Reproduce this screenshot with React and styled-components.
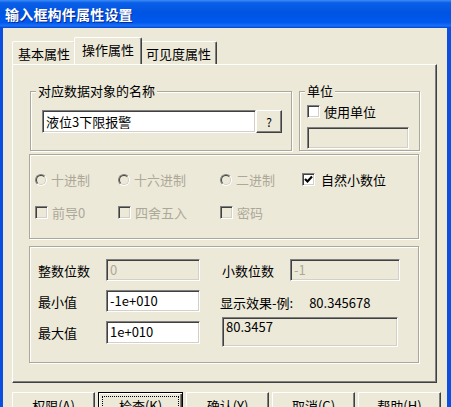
import React from 'react';
import styled, { createGlobalStyle, css } from 'styled-components';

const GlobalStyle = createGlobalStyle`
  html, body {
    margin: 0;
    padding: 0;
    background: #ece9d8;
  }
  * {
    box-sizing: border-box;
  }
`;

const FONT = `"Noto Sans CJK SC", "Noto Sans", sans-serif`;
const FACE = '#ece9d8';
const GRAY = '#aca899';

const sunken = css`
  border: 1px solid;
  border-color: #808080 #ffffff #ffffff #808080;
  box-shadow: inset 1px 1px 0 #404040, inset -1px -1px 0 #d4d0c8;
`;

const Window = styled.div`
  width: 451px;
  height: 407px;
  overflow: hidden;
  display: flex;
  flex-direction: column;
  background: ${FACE};
  font-family: ${FONT};
  font-size: 13px;
  color: #000;
`;

const TitleBar = styled.div`
  height: 28px;
  flex: none;
  display: flex;
  align-items: center;
  padding-left: 5px;
  background: linear-gradient(
    #3d8cf5 0%,
    #0a5fe8 10%,
    #0054e3 45%,
    #0058ee 80%,
    #1b6ff5 92%,
    #0046d6 100%
  );
  color: #fff;
  font-weight: bold;
  font-size: 14px;
  letter-spacing: 0.2px;
  text-shadow: 1px 1px 0 #0a2a8c;
`;

const Body = styled.div`
  flex: 1;
  display: flex;
  flex-direction: column;
  border-left: 3px solid #0b4fe0;
  border-right: 4px solid #0b4fe0;
  padding: 10px 0 0 9px;
`;

const TabRow = styled.div`
  display: flex;
  align-items: flex-end;
  height: 26px;
  position: relative;
  z-index: 1;
`;

const Tab = styled.div`
  height: ${({ $active }) => ($active ? '27px' : '23px')};
  padding: 0 ${({ $active }) => ($active ? '7px' : '5px')};
  margin: 0 ${({ $active }) => ($active ? '-2px' : '0')};
  display: flex;
  align-items: center;
  background: ${FACE};
  border: 1px solid;
  border-bottom: none;
  border-color: #fff #404040 #404040 #fff;
  border-radius: 2px 2px 0 0;
  box-shadow: inset -1px 0 0 #808080;
  line-height: 1;
  padding-bottom: ${({ $active }) => ($active ? '3px' : '0')};
  position: relative;
  z-index: ${({ $active }) => ($active ? 2 : 0)};
`;

const Panel = styled.div`
  width: 425px;
  height: 319px;
  flex: none;
  border: 1px solid;
  border-color: #fff #404040 #404040 #fff;
  box-shadow: inset -1px -1px 0 #808080;
  padding: 26px 0 0 16px;
  display: flex;
  flex-direction: column;
`;

const Group = styled.div`
  position: relative;
  width: ${({ $w }) => $w}px;
  height: ${({ $h }) => $h}px;
  margin-top: ${({ $top }) => $top || 0}px;
  flex: none;
  border: 1px solid ${GRAY};
  box-shadow: inset 1px 1px 0 #fff, 1px 1px 0 #fff;
`;

const Caption = styled.span`
  position: absolute;
  top: -10px;
  left: 5px;
  padding: 0 2px;
  background: ${FACE};
  line-height: 18px;
`;

const TopRow = styled.div`
  display: flex;
  gap: 7px;
  padding-left: 1px;
`;

const NameBody = styled.div`
  display: flex;
  padding: 18px 0 0 11px;
`;

const TextBox = styled.div`
  ${sunken};
  width: ${({ $w }) => $w}px;
  height: ${({ $h }) => $h || 22}px;
  background: ${({ $disabled, $grey }) => ($disabled || $grey ? FACE : '#fff')};
  color: ${({ $disabled }) => ($disabled ? GRAY : '#000')};
  padding: 0 3px;
  display: flex;
  align-items: ${({ $top }) => ($top ? 'flex-start' : 'center')};
  line-height: 16px;
  white-space: nowrap;
  overflow: hidden;
`;

const SmallButton = styled.div`
  width: 26px;
  height: 23px;
  display: flex;
  align-items: center;
  justify-content: center;
  border: 1px solid;
  border-color: #fff #404040 #404040 #fff;
  box-shadow: inset -1px -1px 0 #808080;
  font-size: 12px;
`;

const UnitBody = styled.div`
  display: flex;
  flex-direction: column;
  padding: 11px 0 0 7px;
  gap: 7px;
`;

const Option = styled.div`
  display: flex;
  align-items: center;
  gap: ${({ $gap }) => $gap || 4}px;
  height: 17px;
  line-height: 17px;
  white-space: nowrap;
  color: ${({ $disabled }) => ($disabled ? GRAY : '#000')};
`;

const Box = styled.span`
  width: 13px;
  height: 13px;
  flex: none;
  ${sunken};
  background: ${({ $disabled }) => ($disabled ? FACE : '#fff')};
  display: flex;
  align-items: center;
  justify-content: center;
`;

const Radio = styled.span`
  width: 12px;
  height: 12px;
  flex: none;
  border-radius: 50%;
  border: 1px solid;
  border-color: #808080 #fff #fff #808080;
  display: flex;

  &::after {
    content: '';
    flex: 1;
    border-radius: 50%;
    border: 1px solid;
    border-color: #404040 #d4d0c8 #d4d0c8 #404040;
    background: ${FACE};
  }
`;

const OptionGrid = styled.div`
  display: grid;
  grid-template-columns: 83px 102px 82px auto;
  row-gap: 16px;
  padding: 16px 0 0 5px;
`;

const ValueGrid = styled.div`
  display: grid;
  grid-template-columns: 68px 94px 20px 70px 110px;
  grid-auto-rows: 22px;
  row-gap: 9px;
  padding: 12px 0 0 8px;
  align-items: center;
`;

const Label = styled.span`
  padding-left: ${({ $pad }) => $pad || 0}px;
  white-space: nowrap;
`;

const Sample = styled.div`
  grid-column: 4 / span 2;
  display: flex;
  gap: 16px;
  white-space: nowrap;
  margin-top: 3px;
`;

const Preview = styled(TextBox)`
  grid-column: 4 / span 2;
  margin: -4px 0 -4px 2px;
  padding: 1px 3px;
`;

const Buttons = styled.div`
  display: flex;
  gap: 3px;
  margin-top: 9px;
`;

const Button = styled.div`
  width: 83px;
  height: 24px;
  flex: none;
  display: flex;
  align-items: center;
  justify-content: center;
  border: 1px solid;
  border-color: #fff #404040 #404040 #fff;
  box-shadow: inset -1px -1px 0 #808080;
  padding-top: 2px;
  ${({ $default }) =>
    $default &&
    css`
      width: 85px;
      border: 1px solid #000;
      box-shadow: inset 1px 1px 0 #fff, inset -1px -1px 0 #404040,
        inset -2px -2px 0 #808080;
      outline: 1px dotted #000;
      outline-offset: -5px;
    `}
`;

function Check() {
  return (
    <svg width="9" height="9" viewBox="0 0 9 9">
      <polyline points="1,4 3.5,6.5 8,1.5" fill="none" stroke="#000" strokeWidth="2.2" />
    </svg>
  );
}

function RadioOption({ label }) {
  return (
    <Option $disabled>
      <Radio />
      {label}
    </Option>
  );
}

function CheckOption({ label, checked, disabled, gap }) {
  return (
    <Option $disabled={disabled} $gap={gap}>
      <Box $disabled={disabled}>{checked && <Check />}</Box>
      {label}
    </Option>
  );
}

export default function App() {
  return (
    <>
      <GlobalStyle />
      <Window>
        <TitleBar>输入框构件属性设置</TitleBar>
        <Body>
          <TabRow>
            <Tab>基本属性</Tab>
            <Tab $active>操作属性</Tab>
            <Tab>可见度属性</Tab>
          </TabRow>
          <Panel>
            <TopRow>
              <Group $w={262} $h={60}>
                <Caption>对应数据对象的名称</Caption>
                <NameBody>
                  <TextBox $w={214} $h={23}>液位3下限报警</TextBox>
                  <SmallButton>?</SmallButton>
                </NameBody>
              </Group>
              <Group $w={121} $h={60}>
                <Caption>单位</Caption>
                <UnitBody>
                  <CheckOption label="使用单位" gap={4} />
                  <TextBox $w={102} $disabled />
                </UnitBody>
              </Group>
            </TopRow>

            <Group $w={390} $h={85} $top={3}>
              <OptionGrid>
                <RadioOption label="十进制" />
                <RadioOption label="十六进制" />
                <RadioOption label="二进制" />
                <CheckOption label="自然小数位" checked gap={6} />
                <CheckOption label="前导0" disabled />
                <CheckOption label="四舍五入" disabled />
                <CheckOption label="密码" disabled />
              </OptionGrid>
            </Group>

            <Group $w={390} $h={117} $top={7}>
              <ValueGrid>
                <Label>整数位数</Label>
                <TextBox $w={94} $disabled>0</TextBox>
                <span />
                <Label $pad={2}>小数位数</Label>
                <TextBox $w={110} $disabled>-1</TextBox>

                <Label>最小值</Label>
                <TextBox $w={94}>-1e+010</TextBox>
                <span />
                <Sample>
                  <span>显示效果-例:</span>
                  <span>80.345678</span>
                </Sample>

                <Label>最大值</Label>
                <TextBox $w={94} $h={23}>1e+010</TextBox>
                <span />
                <Preview $w={176} $h={30} $grey $top>
                  80.3457
                </Preview>
              </ValueGrid>
            </Group>
          </Panel>
          <Buttons>
            <Button>权限(A)</Button>
            <Button $default>检查(K)</Button>
            <Button>确认(Y)</Button>
            <Button>取消(C)</Button>
            <Button>帮助(H)</Button>
          </Buttons>
        </Body>
      </Window>
    </>
  );
}
